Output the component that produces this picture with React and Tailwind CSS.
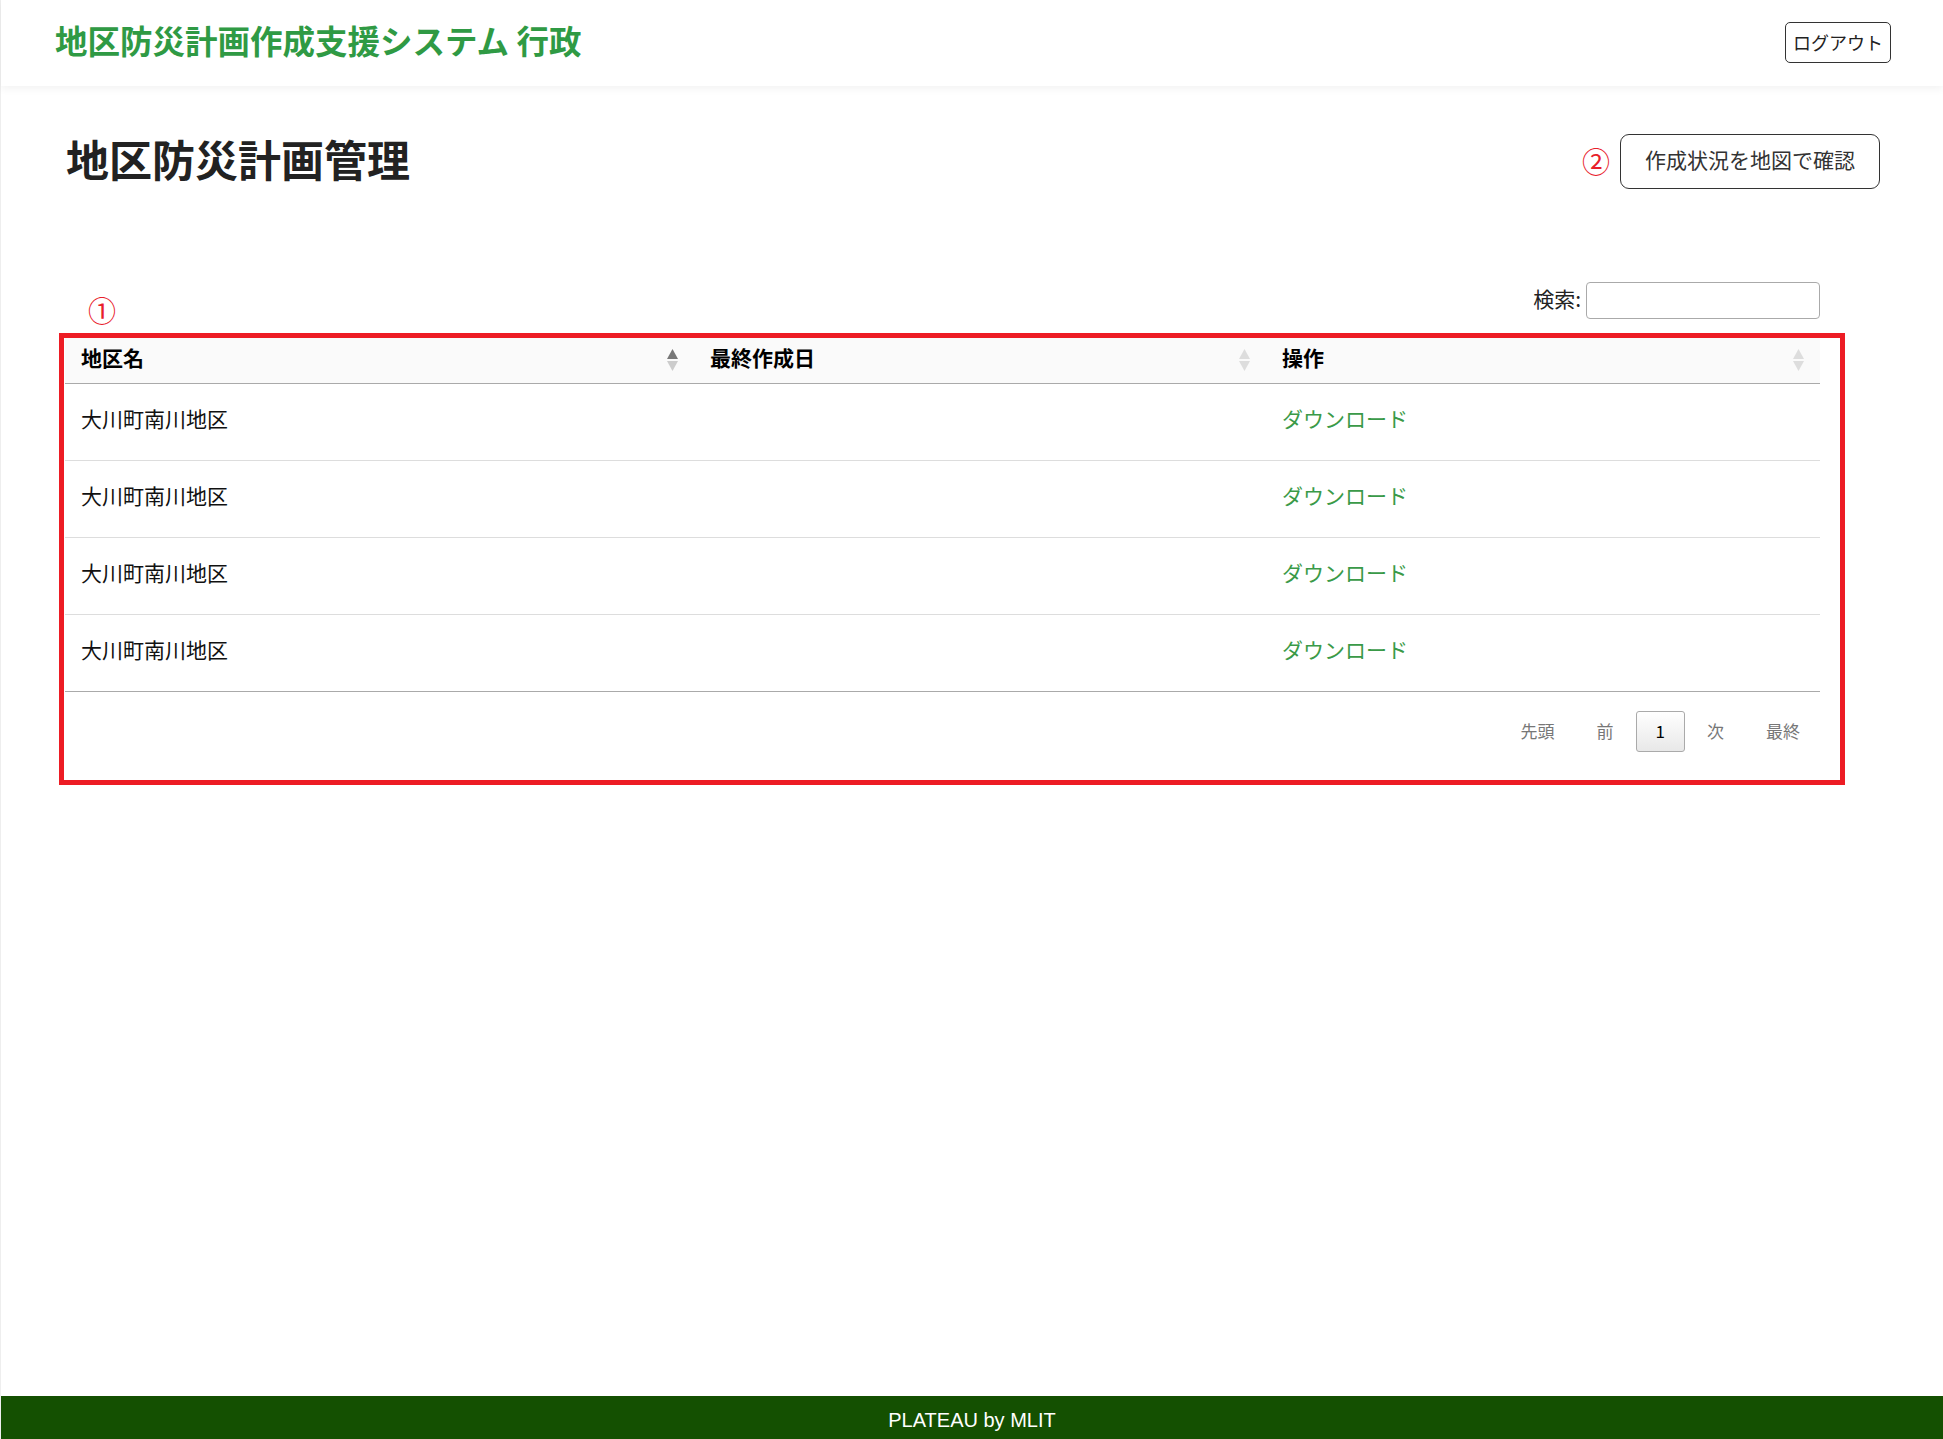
import React from "react";

const rows = [
  { name: "大川町南川地区", date: "" },
  { name: "大川町南川地区", date: "" },
  { name: "大川町南川地区", date: "" },
  { name: "大川町南川地区", date: "" },
];

const SortIcon = ({ active }) => (
  <svg width="13" height="22" viewBox="0 0 13 22">
    <polygon points="6.5,0 12,10 1,10" fill={active ? "#777777" : "#dddddd"} />
    <polygon points="1,12 12,12 6.5,22" fill={active ? "#cccccc" : "#dddddd"} />
  </svg>
);

const PageButton = ({ label, current }) => (
  <button
    className={
      current
        ? "ml-[2px] h-[41px] px-[19px] border border-[#aaaaaa] rounded-[3px] bg-gradient-to-b from-white to-[#e8e8e8] text-[17px] text-black"
        : "ml-[2px] h-[41px] px-[19px] border border-transparent text-[17px] text-[#777777]"
    }
  >
    {label}
  </button>
);

const App = () => {
  return (
    <div
      className="min-h-screen flex flex-col bg-white border-l border-[#eeeeee] text-[#222222]"
      style={{ fontFamily: '"Noto Sans CJK JP", "Noto Sans", sans-serif' }}
    >
      {/* Header */}
      <header className="h-[86px] flex items-center justify-between pl-[54px] pr-[52px] bg-white shadow-[0_3px_8px_rgba(0,0,0,0.05)] relative z-10">
        <h1 className="mb-[6px] text-[32.5px] font-bold text-[#2f9a44] leading-none">
          地区防災計画作成支援システム 行政
        </h1>
        <button className="mb-[2px] h-[41px] w-[106px] border border-[#333333] rounded-[5px] text-[18px] text-[#222222] bg-white">
          ログアウト
        </button>
      </header>

      {/* Main */}
      <main className="flex-1 pl-[58px] pr-[63px]">
        <div className="mt-[48px] flex items-center justify-between h-[55px]">
          <h2 className="mb-[6px] ml-[7px] text-[43px] font-bold text-[#222222] leading-none">
            地区防災計画管理
          </h2>
          <div className="flex items-center">
            <span className="mb-[2px] text-[28px] leading-none text-[#e8202a] mr-[10px]">②</span>
            <button className="h-[55px] px-[24px] border border-[#333333] rounded-[9px] text-[21px] text-[#333333] bg-white">
              <span className="relative -top-[2px]">作成状況を地図で確認</span>
            </button>
          </div>
        </div>

        <div className="mr-[35px] mt-[93px]">
          {/* search row */}
          <div className="flex justify-between items-start pl-[29px] pr-[25px] h-[51px]">
            <span className="mt-[14px] text-[28px] leading-none text-[#e8202a]">①</span>
            <label className="flex items-center h-[37px] text-[21px] text-[#222222]">
              <span className="mr-[5px] mb-[4px]">検索:</span>
              <input
                type="text"
                className="w-[234px] h-[37px] border border-[#aaaaaa] rounded-[4px] px-2 outline-none"
              />
            </label>
          </div>

          {/* annotated table */}
          <div className="border-[5px] border-[#ed1c24] pl-px pr-[20px] pb-[28px]">
            <table className="w-full table-fixed border-collapse">
              <thead>
                <tr className="bg-[#fafafa] h-[45px] border-b border-[#aaaaaa]">
                  <th className="w-[629px] pl-[16px] pr-[15px] text-left text-[21px] font-bold text-black">
                    <div className="flex items-center justify-between">
                      <span className="mb-[5px]">地区名</span>
                      <SortIcon active />
                    </div>
                  </th>
                  <th className="w-[572px] pl-[16px] pr-[15px] text-left text-[21px] font-bold text-black">
                    <div className="flex items-center justify-between">
                      <span className="mb-[5px]">最終作成日</span>
                      <SortIcon />
                    </div>
                  </th>
                  <th className="pl-[16px] pr-[15px] text-left text-[21px] font-bold text-black">
                    <div className="flex items-center justify-between">
                      <span className="mb-[5px]">操作</span>
                      <SortIcon />
                    </div>
                  </th>
                </tr>
              </thead>
              <tbody>
                {rows.map((row, i) => (
                  <tr
                    key={i}
                    className={
                      i === rows.length - 1
                        ? "h-[77px] border-b border-[#aaaaaa]"
                        : "h-[77px] border-b border-[#dddddd]"
                    }
                  >
                    <td className="px-[16px] pb-[6px] text-[21px] text-[#111111]">{row.name}</td>
                    <td className="px-[16px] pb-[6px] text-[21px] text-[#111111]">{row.date}</td>
                    <td className="px-[16px] pb-[6px] text-[21px]">
                      <a href="#" className="text-[#3a9a48]">
                        ダウンロード
                      </a>
                    </td>
                  </tr>
                ))}
              </tbody>
            </table>

            {/* pagination */}
            <div className="mt-[19px] flex justify-end">
              <PageButton label="先頭" />
              <PageButton label="前" />
              <PageButton label="1" current />
              <PageButton label="次" />
              <PageButton label="最終" />
            </div>
          </div>
        </div>
      </main>

      {/* Footer */}
      <footer
        className="h-[43px] bg-[#145001] flex items-center justify-center text-white text-[20px]"
        style={{ fontFamily: '"Liberation Sans", Arial, sans-serif' }}
      >
        <span className="relative top-[2px]">PLATEAU by MLIT</span>
      </footer>
    </div>
  );
};

export default App;
